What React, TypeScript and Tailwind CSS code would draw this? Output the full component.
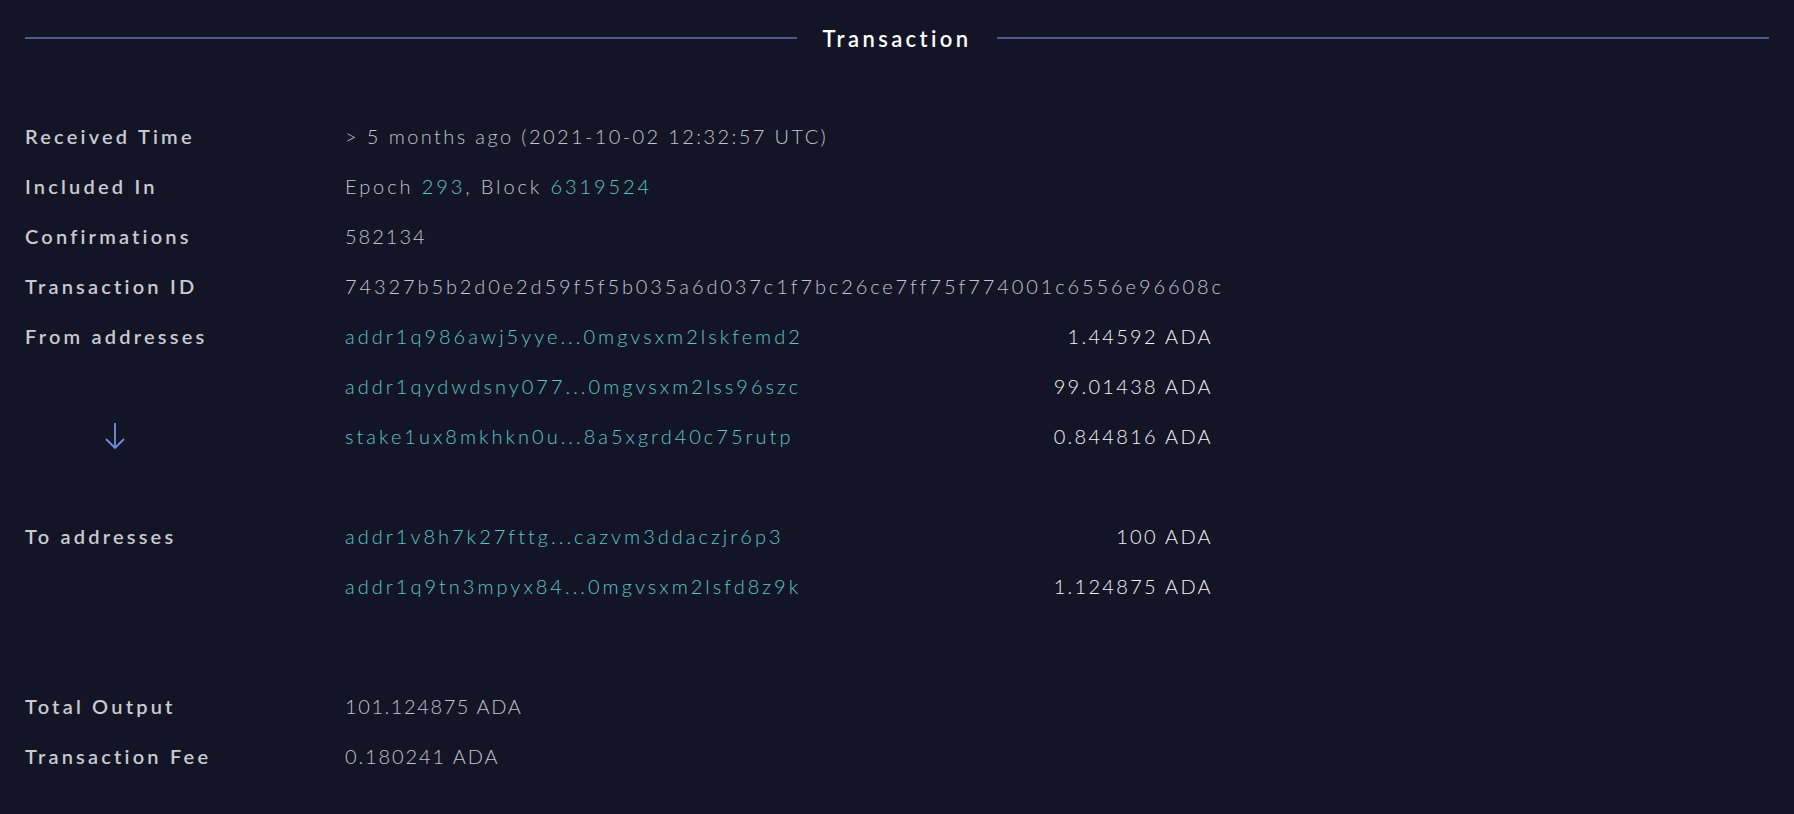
import React from "react";

const font = { fontFamily: '"Lato", "Open Sans", sans-serif' };

function Label({ children }: { children?: React.ReactNode }) {
  return (
    <div className="w-[320px] shrink-0 text-[20px] font-semibold tracking-[3.2px] text-[#c9cad0]">
      {children}
    </div>
  );
}

function Row({ label, children }: { label?: React.ReactNode; children?: React.ReactNode }) {
  return (
    <div className="flex h-[50px] items-center">
      <Label>{label}</Label>
      <div className="text-[20px] font-light tracking-[2.9px] text-[#c2c4cc]">{children}</div>
    </div>
  );
}

function AddrRow({ label, addr, amount }: { label?: React.ReactNode; addr: string; amount: string }) {
  return (
    <div className="flex h-[50px] items-center">
      <Label>{label}</Label>
      <div className="flex w-[868px] items-center justify-between text-[20px] font-light">
        <span className="tracking-[3px] text-[#5ac6ca]">{addr}</span>
        <span className="tracking-[2.3px] text-[#f3f3f6]">{amount}</span>
      </div>
    </div>
  );
}

export default function App() {
  return (
    <div className="min-h-screen w-full bg-[#131526] px-[25px]" style={font}>
      <div className="flex h-[76px] items-center">
        <div className="h-[2px] flex-1 bg-[#4b5a8c]" />
        <div className="px-[25px] text-[22px] font-semibold tracking-[3.4px] text-white">Transaction</div>
        <div className="h-[2px] flex-1 bg-[#4b5a8c]" />
      </div>
      <div className="mt-[35px] flex flex-col">
        <Row label="Received Time">
          <span className="tracking-[2.4px]">&gt; 5 months ago (2021-10-02 12:32:57 UTC)</span>
        </Row>
        <Row label="Included In">
          Epoch <span className="text-[#5ac6ca]">293</span>, Block{" "}
          <span className="text-[#5ac6ca]">6319524</span>
        </Row>
        <Row label="Confirmations">
          <span className="tracking-[2px]">582134</span>
        </Row>
        <Row label="Transaction ID">
          <span className="tracking-[2.9px]">74327b5b2d0e2d59f5f5b035a6d037c1f7bc26ce7ff75f774001c6556e96608c</span>
        </Row>
        <AddrRow label="From addresses" addr="addr1q986awj5yye...0mgvsxm2lskfemd2" amount="1.44592 ADA" />
        <AddrRow addr="addr1qydwdsny077...0mgvsxm2lss96szc" amount="99.01438 ADA" />
        <AddrRow
          label={
            <div className="ml-[80px] flex w-[20px] justify-center">
              <svg width="20" height="28" viewBox="0 0 20 28" fill="none" stroke="#6f8fe0" strokeWidth="1.8">
                <path d="M10 1 V26" />
                <path d="M1 17 L10 26 L19 17" />
              </svg>
            </div>
          }
          addr="stake1ux8mkhkn0u...8a5xgrd40c75rutp"
          amount="0.844816 ADA"
        />
        <div className="h-[50px]" />
        <AddrRow label="To addresses" addr="addr1v8h7k27fttg...cazvm3ddaczjr6p3" amount="100 ADA" />
        <AddrRow addr="addr1q9tn3mpyx84...0mgvsxm2lsfd8z9k" amount="1.124875 ADA" />
        <div className="h-[70px]" />
        <Row label="Total Output">
          <span className="tracking-[1.6px]">101.124875 ADA</span>
        </Row>
        <Row label="Transaction Fee">
          <span className="tracking-[1.9px]">0.180241 ADA</span>
        </Row>
      </div>
    </div>
  );
}
